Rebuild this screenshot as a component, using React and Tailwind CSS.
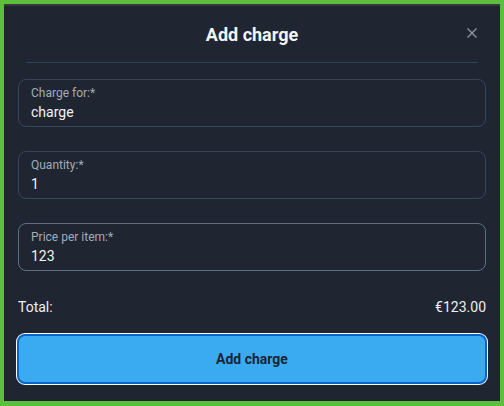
import React from 'react'

const Field = ({ label, value, hovered }) => (
  <div
    className={
      'h-12 rounded-lg border px-3 pt-[5px] ' +
      (hovered ? 'border-[#5d6e86]' : 'border-[#364459]')
    }
  >
    <div className="text-[12px] leading-4 text-[#a3abb7]">{label}</div>
    <div className="mt-px text-[14px] font-normal leading-5 text-[#f1f3f6]">{value}</div>
  </div>
)

export default function App() {
  return (
    <div
      className="w-[504px] h-[406px] bg-[#5dc03d] pt-1 pl-1 pr-1 pb-[5px]"
      style={{ fontFamily: 'Roboto, "Liberation Sans", sans-serif' }}
    >
      <div className="h-full bg-[#1f2632] border-t-2 border-[#3a3a38] flex flex-col">
        {/* header */}
        <div className="relative h-[56px] flex items-center justify-center">
          <h2 className="text-[18px] font-bold text-[#f3f4f6]">Add charge</h2>
          <button className="absolute right-[22px] top-[21px] text-[#8a93a0]">
            <svg width="12" height="12" viewBox="0 0 12 12" fill="none" stroke="currentColor" strokeWidth="1.4">
              <path d="M1.5 1.5l9 9M10.5 1.5l-9 9" />
            </svg>
          </button>
        </div>
        <div className="mx-[22px] h-px bg-[#334259]" />

        <div className="px-[14px] pt-4 flex flex-col gap-6">
          <Field label="Charge for:*" value="charge" />
          <Field label="Quantity:*" value="1" />
          <Field label="Price per item:*" value="123" hovered />
        </div>

        <div className="px-[14px] mt-[26px] h-5 flex items-center justify-between text-[14px] font-normal text-[#eef0f3]">
          <span>Total:</span>
          <span>€123.00</span>
        </div>

        <div className="px-[13px] mt-[17px]">
          <button className="w-full h-[50px] rounded-lg bg-[#3aabf1] border-2 border-[#0b62c9] ring-1 ring-white text-[14px] font-bold text-[#1c2633]">
            Add charge
          </button>
        </div>
      </div>
    </div>
  )
}
